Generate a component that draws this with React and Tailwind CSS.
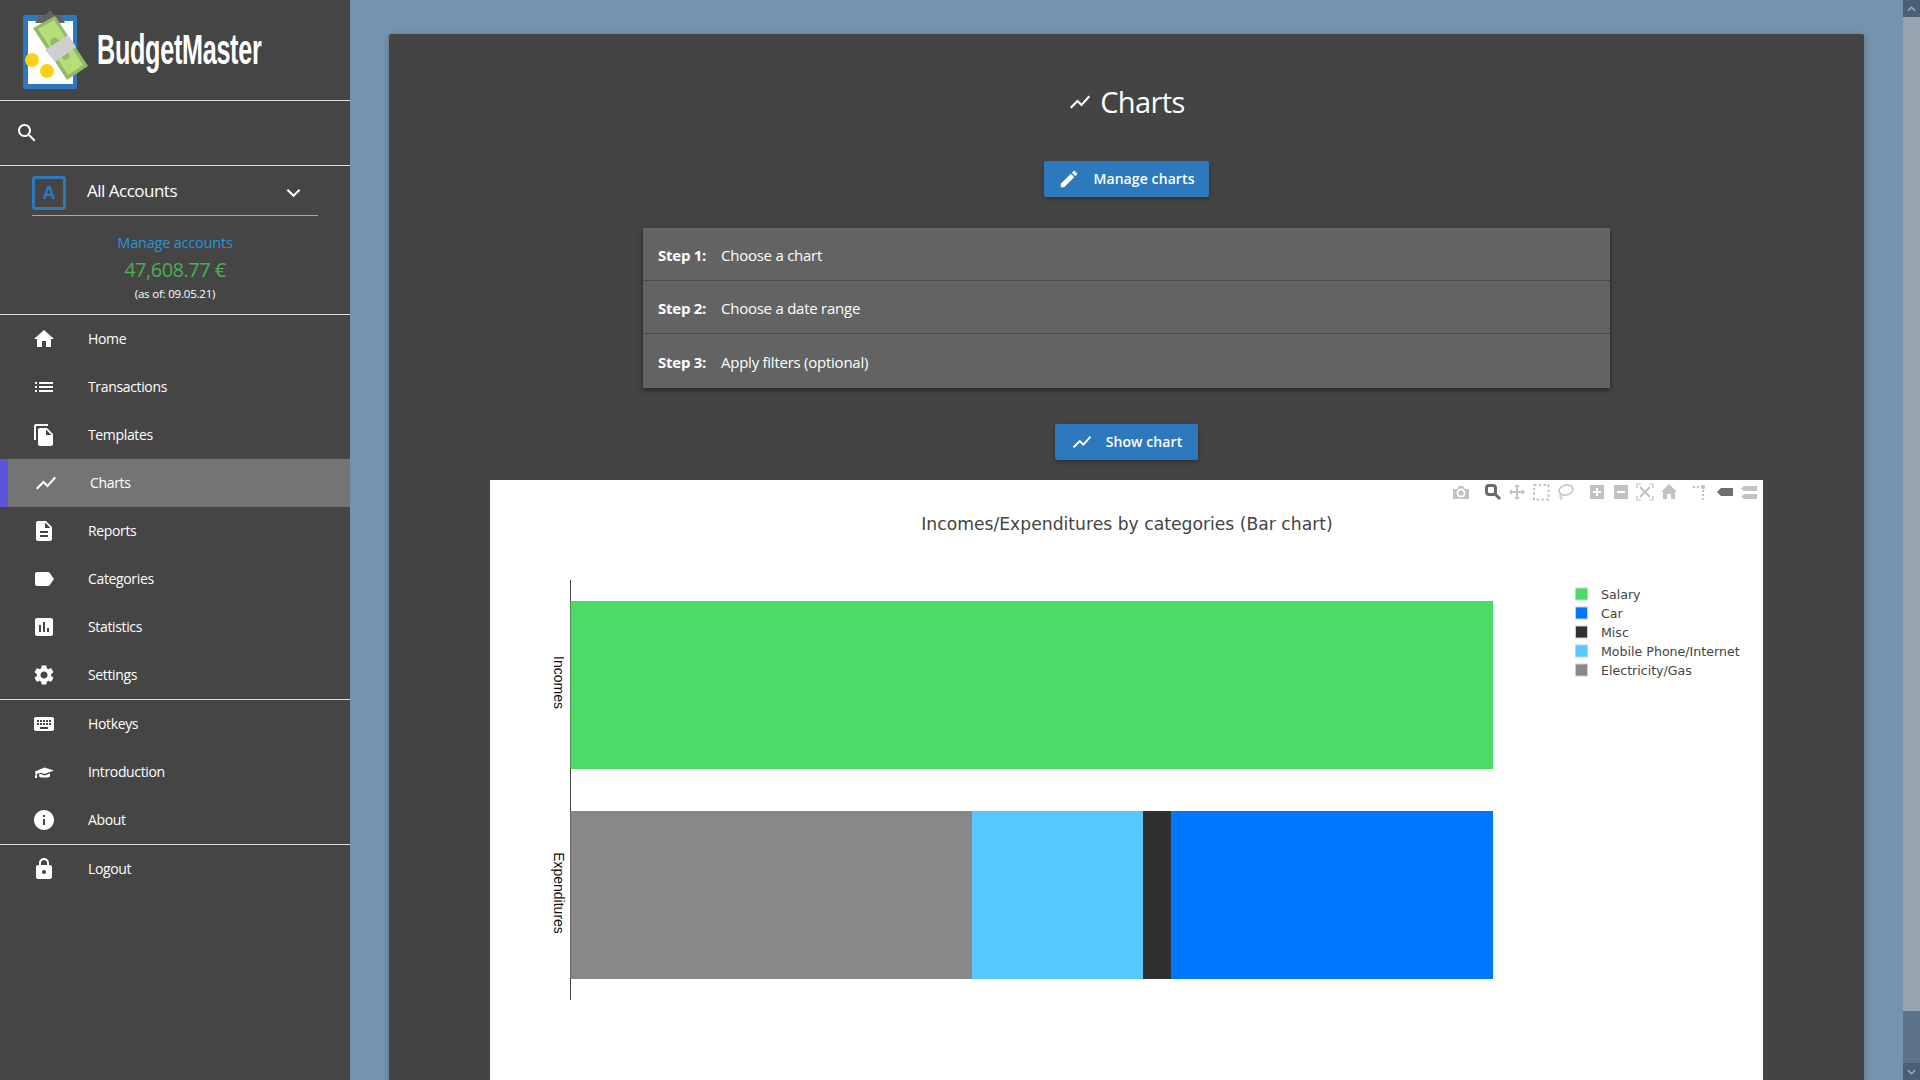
const FONT = "font-['Open_Sans','Noto_Sans',sans-serif]";

const P = {
  home: "M10 20v-6h4v6h5v-8h3L12 3 2 12h3v8z",
  list: "M3 13h2v-2H3v2zm0 4h2v-2H3v2zm0-8h2V7H3v2zm4 4h14v-2H7v2zm0 4h14v-2H7v2zM7 7v2h14V7H7z",
  copy: "M16 1H4c-1.1 0-2 .9-2 2v14h2V3h12V1zm-1 4l6 6v10c0 1.1-.9 2-2 2H7.99C6.89 23 6 22.1 6 21l.01-14c0-1.1.89-2 1.99-2h7zm-1 7h5.5L14 6.5V12z",
  chart: "M3.5 18.49l6-6.01 4 4L22 6.92l-1.41-1.41-7.09 7.97-4-4L2 16.99z",
  desc: "M14 2H6c-1.1 0-1.99.9-1.99 2L4 20c0 1.1.89 2 1.99 2H18c1.1 0 2-.9 2-2V8l-6-6zm2 16H8v-2h8v2zm0-4H8v-2h8v2zm-3-5V3.5L18.5 9H13z",
  label: "M17.63 5.84C17.27 5.33 16.67 5 16 5L5 5.01C3.9 5.01 3 5.9 3 7v10c0 1.1.9 1.99 2 1.99L16 19c.67 0 1.27-.33 1.63-.84L22 12l-4.37-6.16z",
  stats: "M19 3H5c-1.1 0-2 .9-2 2v14c0 1.1.9 2 2 2h14c1.1 0 2-.9 2-2V5c0-1.1-.9-2-2-2zM9 17H7v-7h2v7zm4 0h-2V7h2v10zm4 0h-2v-4h2v4z",
  gear: "M19.14 12.94c.04-.3.06-.61.06-.94 0-.32-.02-.64-.07-.94l2.03-1.58c.18-.14.23-.41.12-.61l-1.92-3.32c-.12-.22-.37-.29-.59-.22l-2.39.96c-.5-.38-1.03-.7-1.62-.94l-.36-2.54c-.04-.24-.24-.41-.48-.41h-3.84c-.24 0-.43.17-.47.41l-.36 2.54c-.59.24-1.13.57-1.62.94l-2.39-.96c-.22-.08-.47 0-.59.22L2.74 8.87c-.12.21-.08.47.12.61l2.03 1.58c-.05.3-.09.63-.09.94s.02.64.07.94l-2.03 1.58c-.18.14-.23.41-.12.61l1.92 3.32c.12.22.37.29.59.22l2.39-.96c.5.38 1.03.7 1.62.94l.36 2.54c.05.24.24.41.48.41h3.84c.24 0 .44-.17.47-.41l.36-2.54c.59-.24 1.13-.56 1.62-.94l2.39.96c.22.08.47 0 .59-.22l1.92-3.32c.12-.22.07-.47-.12-.61l-2.01-1.58zM12 15.6c-1.98 0-3.6-1.62-3.6-3.6s1.62-3.6 3.6-3.6 3.6 1.62 3.6 3.6-1.62 3.6-3.6 3.6z",
  keys: "M20 5H4c-1.1 0-1.99.9-1.99 2L2 17c0 1.1.9 2 2 2h16c1.1 0 2-.9 2-2V7c0-1.1-.9-2-2-2zm-9 3h2v2h-2V8zm0 3h2v2h-2v-2zM8 8h2v2H8V8zm0 3h2v2H8v-2zm-1 2H5v-2h2v2zm0-3H5V8h2v2zm9 7H8v-2h8v2zm0-4h-2v-2h2v2zm0-3h-2V8h2v2zm3 3h-2v-2h2v2zm0-3h-2V8h2v2z",
  info: "M12 2C6.48 2 2 6.48 2 12s4.48 10 10 10 10-4.48 10-10S17.52 2 12 2zm1 15h-2v-6h2v6zm0-8h-2V7h2v2z",
  lock: "M18 8h-1V6c0-2.76-2.24-5-5-5S7 3.24 7 6v2H6c-1.1 0-2 .9-2 2v10c0 1.1.9 2 2 2h12c1.1 0 2-.9 2-2V10c0-1.1-.9-2-2-2zm-6 9c-1.1 0-2-.9-2-2s.9-2 2-2 2 .9 2 2-.9 2-2 2zm3.1-9H8.9V6c0-1.71 1.39-3.1 3.1-3.1 1.71 0 3.1 1.39 3.1 3.1v2z",
  edit: "M3 17.25V21h3.75L17.81 9.94l-3.75-3.75L3 17.25zM20.71 7.04c.39-.39.39-1.02 0-1.41l-2.34-2.34c-.39-.39-1.02-.39-1.41 0l-1.83 1.83 3.75 3.75 1.83-1.83z",
  search: "M15.5 14h-.79l-.28-.27C15.41 12.59 16 11.11 16 9.5 16 5.91 13.09 3 9.5 3S3 5.91 3 9.5 5.91 16 9.5 16c1.61 0 3.09-.59 4.23-1.57l.27.28v.79l5 4.99L20.49 19l-4.99-5zm-6 0C7.01 14 5 11.99 5 9.5S7.01 5 9.5 5 14 7.01 14 9.5 11.99 14 9.5 14z",
};

function Icon({ d, className }) {
  return (
    <svg viewBox="0 0 24 24" className={className} fill="currentColor">
      <path d={d} />
    </svg>
  );
}

function CapIcon() {
  return (
    <svg viewBox="0 0 24 24" className="w-[24px] h-[24px] shrink-0 text-white" fill="currentColor">
      <path d="M3 11.5 L12.5 7.5 L22 10.6 L12.5 14 L9 12.8 L5 14 L5 15 L3.6 15z" />
      <path d="M7 14.6 L9 14 L12.5 15.4 L18 13.4 V16.4 C16 18 9 18 7 16.4z" />
      <path d="M3 15.2 H5 V18 H3z" />
    </svg>
  );
}

function NavItem({ icon, label, active, cap }) {
  return (
    <div
      className={
        active
          ? "flex h-12 items-center bg-[#747474] border-l-[8px] border-[#5a55d8] pl-[26px]"
          : "flex h-12 items-center pl-[32px]"
      }
    >
      {cap ? <CapIcon /> : <Icon d={icon} className="w-[24px] h-[24px] text-white shrink-0" />}
      <span className="ml-[32px] pb-[2px] text-[14px] font-medium tracking-[-0.35px] text-white">{label}</span>
    </div>
  );
}

function Logo() {
  return (
    <svg viewBox="0 0 100 100" className="w-[100px] h-[100px] shrink-0">
      <rect x="23" y="15" width="54" height="74" rx="2" fill="#2e78bd" />
      <rect x="28" y="21" width="45" height="63" fill="#fff" />
      <path d="M35 23 L39 16 L46 15 L50 10 L54 15 L61 15 L65 23 Z" fill="#616161" />
      <path d="M33 28 L55 16 L88 66 L67 80 Z" fill="#94b96b" />
      <path d="M38 29 L54 20 L83 65 L68 75 Z" fill="#b5dd78" />
      <ellipse cx="56" cy="44" rx="5" ry="7" fill="#94b96b" transform="rotate(-30 56 44)" />
      <ellipse cx="65" cy="55" rx="4" ry="5" fill="#94b96b" transform="rotate(-30 65 55)" />
      <path d="M45 50 L68 35 L76 47 L55 62 Z" fill="#cfcfcf" />
      <circle cx="32" cy="60" r="7" fill="#fdd017" />
      <circle cx="47" cy="71" r="7" fill="#fdd017" />
    </svg>
  );
}

function Sidebar() {
  return (
    <aside className={`w-[350px] shrink-0 h-full bg-[#454545] text-white ${FONT}`}>
      <div className="h-[100px] flex items-center">
        <Logo />
        <span className="font-['Liberation_Sans',sans-serif] font-bold text-[42px] leading-none text-white -ml-[3px] origin-left scale-x-[0.6] tracking-[-0.5px]">
          BudgetMaster
        </span>
      </div>
      <div className="h-px bg-[#dcdcdc]" />
      <div className="h-[64px] flex items-center pl-[15px]">
        <Icon d={P.search} className="w-[24px] h-[24px] text-white" />
      </div>
      <div className="h-px bg-[#dcdcdc]" />
      <div className="h-[148px] px-[32px] flex flex-col">
        <div className="h-[50px] pt-[10px] border-b border-[#a8a8a8] flex items-start">
          <div className="w-[34px] h-[34px] border-[3px] border-[#2e78bd] rounded-[3px] flex items-center justify-center text-[#2e78bd] text-[18px] font-bold font-['Liberation_Sans',sans-serif]">
            A
          </div>
          <span className="ml-[21px] mt-[3px] text-[17px] leading-[24px] tracking-[-0.5px] text-white">All Accounts</span>
          <svg viewBox="0 0 16 10" className="ml-auto mr-[17px] mt-[12px] w-[15px] h-[10px]" fill="none" stroke="#fff" strokeWidth="2.2">
            <path d="M1.5 1.5 L8 8 L14.5 1.5" />
          </svg>
        </div>
        <div className="mt-[17px] text-center text-[14.5px] leading-[20px] tracking-[-0.2px] text-[#2196dd]">Manage accounts</div>
        <div className="mt-[3px] text-center text-[20px] leading-[28px] tracking-[-0.5px] text-[#4caf50]">47,608.77 €</div>
        <div className="mt-[2px] text-center text-[11.5px] leading-[16px] tracking-[-0.2px] text-white">(as of: 09.05.21)</div>
      </div>
      <div className="h-px bg-[#dcdcdc]" />
      <nav>
        <NavItem icon={P.home} label="Home" />
        <NavItem icon={P.list} label="Transactions" />
        <NavItem icon={P.copy} label="Templates" />
        <NavItem icon={P.chart} label="Charts" active />
        <NavItem icon={P.desc} label="Reports" />
        <NavItem icon={P.label} label="Categories" />
        <NavItem icon={P.stats} label="Statistics" />
        <NavItem icon={P.gear} label="Settings" />
      </nav>
      <div className="h-px bg-[#dcdcdc]" />
      <nav>
        <NavItem icon={P.keys} label="Hotkeys" />
        <NavItem label="Introduction" cap />
        <NavItem icon={P.info} label="About" />
      </nav>
      <div className="h-px bg-[#dcdcdc]" />
      <NavItem icon={P.lock} label="Logout" />
    </aside>
  );
}

function Btn({ icon, label, className }) {
  return (
    <div className={`h-[36px] rounded-[2px] bg-[#2e78bd] shadow-[0_2px_4px_rgba(0,0,0,0.3)] flex items-center justify-center text-white ${className}`}>
      <Icon d={icon} className="w-[22px] h-[22px] mr-[13px]" />
      <span className="text-[14px] font-semibold tracking-[0.1px] pb-[1px]">{label}</span>
    </div>
  );
}

function Step({ n, text, border, tall }) {
  return (
    <div className={`flex items-center pl-[15px] pt-[2px] text-[15px] tracking-[-0.25px] text-white ${tall ? "h-[54px]" : "h-[53px]"} ${border ? "border-b border-[#4a4a4a]" : ""}`}>
      <span className="font-bold w-[63px]">Step {n}:</span>
      <span>{text}</span>
    </div>
  );
}

function Plot() {
  const legend = [
    ["Salary", "#4cdb66", 594],
    ["Car", "#0077fe", 613],
    ["Misc", "#303030", 632],
    ["Mobile Phone/Internet", "#57c7ff", 651],
    ["Electricity/Gas", "#888888", 670],
  ];
  const g = "#c2c2c2";
  return (
    <svg viewBox="490 480 1273 600" className="block w-[1273px] h-[600px]">
      <rect x="570" y="580" width="1" height="420" fill="#444" />
      <rect x="570.5" y="601" width="922.5" height="168" fill="#4cdb66" />
      <rect x="570.5" y="811" width="401.5" height="168" fill="#888888" />
      <rect x="972" y="811" width="171" height="168" fill="#57c7ff" />
      <rect x="1143" y="811" width="28" height="168" fill="#303030" />
      <rect x="1171" y="811" width="322" height="168" fill="#0077fe" />
      <text x="1127" y="530" textAnchor="middle" fontFamily="'DejaVu Sans',sans-serif" fontSize="17.2" fill="#444">
        Incomes/Expenditures by categories (Bar chart)
      </text>
      <text transform="translate(554 682.5) rotate(90)" textAnchor="middle" fontFamily="'Liberation Sans',sans-serif" fontSize="14" fill="#111">
        Incomes
      </text>
      <text transform="translate(554 893) rotate(90)" textAnchor="middle" fontFamily="'Liberation Sans',sans-serif" fontSize="14" fill="#111">
        Expenditures
      </text>
      {legend.map(([t, c, y]) => (
        <g key={t}>
          <rect x="1575.5" y={y - 6} width="12" height="12" fill={c} stroke="#cfcfcf" strokeWidth="1" />
          <text x="1601" y={y + 4.5} fontFamily="'DejaVu Sans',sans-serif" fontSize="12.6" fill="#444">{t}</text>
        </g>
      ))}
      {/* modebar */}
      <path d="M1453 489 h4 l2-3 h4 l2 3 h4 v10 h-16z" fill={g} />
      <circle cx="1461" cy="493" r="4.5" fill="#fff" />
      <circle cx="1461" cy="493" r="2.6" fill={g} />
      <rect x="1486.5" y="485.5" width="9" height="9" rx="2.5" fill="none" stroke="#6a6a6a" strokeWidth="3" />
      <path d="M1495 494 L1500 499" stroke="#6a6a6a" strokeWidth="3" />
      <path d="M1517 484 l3 3 h-2 v4 h4 v-2 l3 3 -3 3 v-2 h-4 v4 h2 l-3 3 -3-3 h2 v-4 h-4 v2 l-3-3 3-3 v2 h4 v-4 h-2z" fill={g} />
      <rect x="1534" y="485" width="14.5" height="14.5" fill="none" stroke={g} strokeWidth="2" strokeDasharray="2.4 2.4" />
      <ellipse cx="1566" cy="490" rx="7" ry="5" fill="none" stroke={g} strokeWidth="1.5" transform="rotate(-15 1566 490)" />
      <path d="M1561 494 c-2 3 0 4 1 4 l-1 2" fill="none" stroke={g} strokeWidth="1.5" />
      <rect x="1590" y="485" width="14" height="14" fill={g} />
      <path d="M1596 488h2v3h3v2h-3v3h-2v-3h-3v-2h3z" fill="#fff" />
      <rect x="1614" y="485" width="14" height="14" fill={g} />
      <rect x="1617" y="491" width="8" height="2" fill="#fff" />
      <path d="M1637 488 v-4 h4 M1649 484 h4 v4 M1653 496 v4 h-4 M1641 500 h-4 v-4" fill="none" stroke={g} strokeWidth="1.2" />
      <path d="M1640 487 L1650 497 M1650 487 L1640 497" stroke={g} strokeWidth="2" />
      <path d="M1669 484 L1677 492 H1675 V499 H1671 V494 H1667 V499 H1663 V492 H1661z" fill={g} />
      <path d="M1693 487 h8 M1703 490 v10" stroke={g} strokeWidth="2" strokeDasharray="2 2" />
      <circle cx="1703" cy="487" r="2.2" fill={g} />
      <path d="M1717 492 L1721 488 H1733 V496 H1721z" fill="#6f6f6f" />
      <path d="M1741 488.5 L1744 486 H1757 V491 H1744z M1741 496.5 L1744 494 H1757 V499 H1744z" fill={g} />
    </svg>
  );
}

function Scrollbar() {
  return (
    <div className="w-[17px] shrink-0 h-full flex flex-col bg-[#5d7389]">
      <div className="h-[17px] bg-[#4a5f75] flex items-center justify-center">
        <svg viewBox="0 0 10 6" className="w-[9px] h-[6px]" fill="none" stroke="#9fb0c0" strokeWidth="1.6"><path d="M1 5 L5 1 L9 5" /></svg>
      </div>
      <div className="h-[994px] bg-[#97a4b0]" />
      <div className="flex-1" />
      <div className="h-[17px] bg-[#4a5f75] flex items-center justify-center">
        <svg viewBox="0 0 10 6" className="w-[9px] h-[6px]" fill="none" stroke="#9fb0c0" strokeWidth="1.6"><path d="M1 1 L5 5 L9 1" /></svg>
      </div>
    </div>
  );
}

export default function App() {
  return (
    <div className={`flex w-[1920px] h-[1080px] overflow-hidden bg-[#7593ae] ${FONT}`}>
      <Sidebar />
      <main className="flex-1 min-w-0 h-full px-[39px] pt-[34px] overflow-hidden">
        <div className="bg-[#444444] h-[1100px] shadow-[0_2px_6px_rgba(0,0,0,0.25)] rounded-[2px] flex flex-col items-center">
          <div className="mt-[45px] h-[46px] flex items-center text-white">
            <Icon d={P.chart} className="w-[24px] h-[24px] mr-[8px]" />
            <span className="text-[29px] tracking-[-0.6px]">Charts</span>
          </div>
          <Btn icon={P.edit} label="Manage charts" className="mt-[36px] w-[165px]" />
          <div className="mt-[31px] w-[967px] bg-[#636363] shadow-[0_2px_5px_rgba(0,0,0,0.5)]">
            <Step n={1} text="Choose a chart" border />
            <Step n={2} text="Choose a date range" border />
            <Step n={3} text="Apply filters (optional)" tall />
          </div>
          <Btn icon={P.chart} label="Show chart" className="mt-[36px] w-[143px]" />
          <div className="mt-[20px] w-[1273px] bg-white">
            <Plot />
          </div>
        </div>
      </main>
      <Scrollbar />
    </div>
  );
}
